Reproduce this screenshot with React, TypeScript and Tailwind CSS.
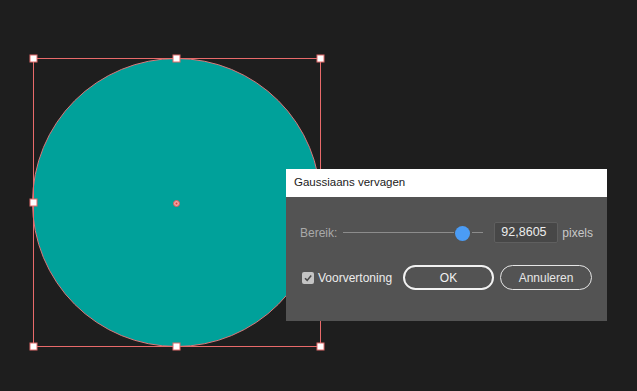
export default function App() {
  const handles = [
    [33, 58], [176, 58], [320, 58],
    [33, 202], [320, 202],
    [33, 346], [176, 346], [320, 346],
  ];

  return (
    <div
      className="relative w-[637px] h-[391px] overflow-hidden bg-[#1e1e1e]"
      style={{ fontFamily: '"Liberation Sans", Arial, sans-serif' }}
    >
      {/* artboard selection */}
      <svg className="absolute left-0 top-0" width="637" height="391">
        <circle cx="176.5" cy="202.5" r="144" fill="#00a19a" stroke="#d9777a" strokeWidth="1" />
        <rect x="33.5" y="58.5" width="287" height="288" fill="none" stroke="#e86a6a" strokeWidth="1" />
        {handles.map(([x, y]) => (
          <rect key={`${x}-${y}`} x={x - 3} y={y - 3} width="7" height="7" fill="#ffffff" stroke="#e26b6b" strokeWidth="1" />
        ))}
        <circle cx="176.5" cy="203.5" r="3" fill="#f3a3a3" stroke="#e05a5a" strokeWidth="1" />
        <circle cx="176.5" cy="203.5" r="1" fill="#e04040" />
      </svg>

      {/* dialog */}
      <div className="absolute left-[286px] top-[169px] w-[321px] h-[152px] bg-[#535353] flex flex-col">
        <div className="h-[28px] bg-white flex items-center pl-[8px] text-[11.5px] text-[#1b1b1b]">
          Gaussiaans vervagen
        </div>
        <div className="flex items-center mt-[25px] pl-[14px] text-[12px]">
          <span className="text-[#a9a9a9]">Bereik:</span>
          <div className="relative ml-[6px] w-[140px] h-[16px] flex items-center">
            <div className="w-[111px] h-px bg-[#8c8c8c]" />
            <div className="ml-[18px] w-[11px] h-px bg-[#8c8c8c]" />
            <div className="absolute left-[112px] top-[1px] w-[15px] h-[15px] rounded-full bg-[#4b9cf5]" />
          </div>
          <div className="ml-[11px] w-[64px] h-[21px] bg-[#474747] border border-[#5f5f5f] rounded-[2px] flex items-center pl-[6px] text-[12.5px] text-[#ececec]">
            92,8605
          </div>
          <span className="ml-[4px] text-[#c8c8c8]">pixels</span>
        </div>
        <div className="flex items-center mt-[22px] pl-[16px] pr-[15px] text-[12px]">
          <div className="w-[12px] h-[12px] rounded-[2px] bg-[#c4c4c4] flex items-center justify-center">
            <svg width="10" height="10" viewBox="0 0 10 10">
              <path d="M2 5.2 L4.2 7.4 L8.2 2.6" fill="none" stroke="#4a4a4a" strokeWidth="1.6" />
            </svg>
          </div>
          <span className="ml-[4px] text-[#ececec]">Voorvertoning</span>
          <div className="ml-auto flex gap-[6px]">
            <button className="w-[91px] h-[25px] rounded-full border-2 border-[#f2f2f2] text-[#f2f2f2] text-[12px]">
              OK
            </button>
            <button className="w-[92px] h-[25px] rounded-full border border-[#e6e6e6] text-[#e6e6e6] text-[12px]">
              Annuleren
            </button>
          </div>
        </div>
      </div>
    </div>
  );
}
